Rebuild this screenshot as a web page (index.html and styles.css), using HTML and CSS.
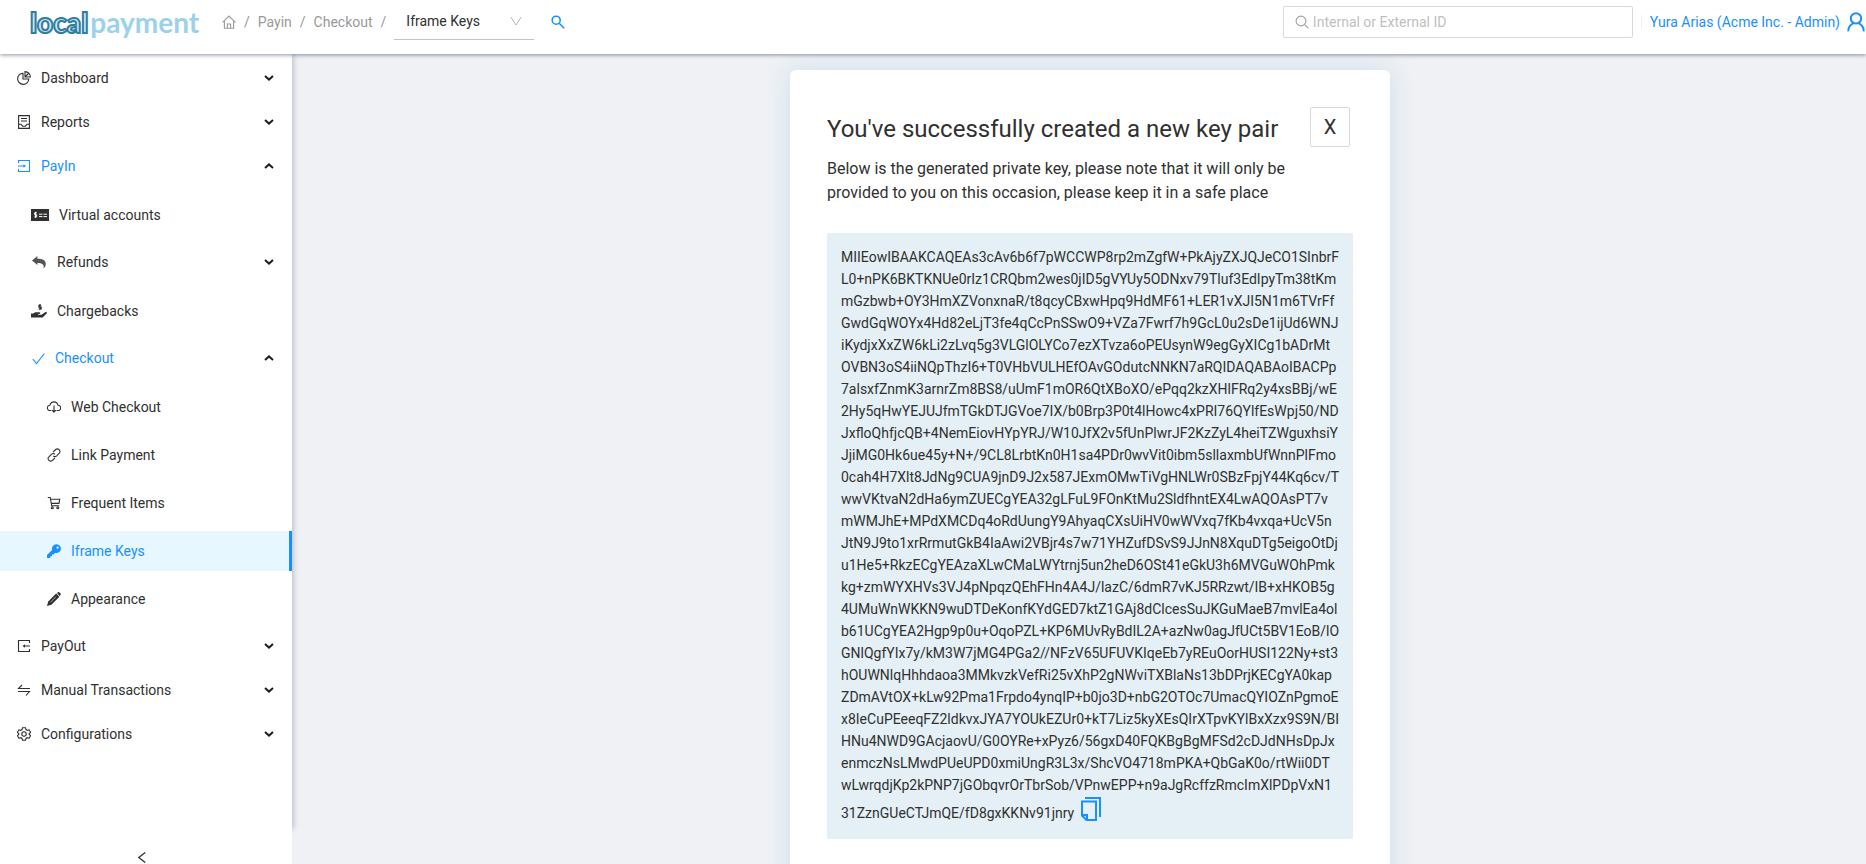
FILE: index.html
```html
<!DOCTYPE html>
<html lang="en">
<head>
<meta charset="utf-8">
<title>Iframe Keys</title>
<link rel="stylesheet" href="styles.css">
</head>
<body>
<div class="app">
  <header class="header">
    <a class="logo" href="#" aria-label="localpayment"><span class="logo-local">local</span><span class="logo-payment">payment</span></a>
    <nav class="breadcrumb" aria-label="Breadcrumb">
      <a class="crumb crumb-home" href="#" aria-label="Home"><svg class="icon" viewBox="0 0 14 14"><path d="M.6 7.4 7 1l6.400 6.400M2.400 6v7.200h9.200V6M5.400 13.200V9h3.200v4.200"/></svg></a>
      <span class="slash">/</span>
      <a class="crumb" href="#">Payin</a>
      <span class="slash">/</span>
      <a class="crumb" href="#">Checkout</a>
      <span class="slash">/</span>
      <span class="picker">
        <select class="picker-select" aria-label="Section"><option>Iframe Keys</option></select>
        <svg class="picker-arrow" viewBox="0 0 12 12"><path d="M.8 2 6 10l5.200-8"/></svg>
      </span>
    </nav>
    <button class="search-button" aria-label="Search"><svg class="icon" viewBox="0 0 14 14"><circle cx="5.2" cy="5.2" r="4"/><path d="m8.200 8.200 5 5"/></svg></button>
    <label class="search-box">
      <svg class="icon" viewBox="0 0 14 14"><circle cx="6" cy="6" r="4.9"/><path d="m9.600 9.600 3.800 3.800"/></svg>
      <input class="search-input" type="text" placeholder="Internal or External ID" aria-label="Internal or External ID">
    </label>
    <a class="user" href="#">Yura Arias (Acme Inc. - Admin)
      <svg class="user-icon" viewBox="0 0 18 20"><circle cx="9" cy="6.4" r="5.2"/><path d="M1.200 19.400c.2-4.200 2.600-7 5.400-8.200M16.800 19.400c-.2-4.200-2.600-7-5.400-8.200"/></svg>
    </a>
  </header>

  <div class="body">
    <aside class="sidebar">
      <nav class="menu-wrap" aria-label="Main">
        <ul class="menu">
          <li><button class="title"><svg class="icon" viewBox="0 0 14 14"><path d="M6 2.200A5.600 5.600 0 1 0 11.800 8H6zM8 .6V6h5.400A5.500 5.500 0 0 0 8 .6zM8 6l3.500-3.500"/></svg>Dashboard<svg class="arrow" viewBox="0 0 10 6"><path d="m1 1 4 3.600L9 1"/></svg></button></li>
          <li><button class="title"><svg class="icon" viewBox="0 0 14 14"><path d="M1.600.6h10.800v12.800H1.600zM4 3.500h6M4 6h6M1.600 9.200H4l1.600 2h2.800l1.600-2h2.400"/></svg>Reports<svg class="arrow" viewBox="0 0 10 6"><path d="m1 1 4 3.600L9 1"/></svg></button></li>
          <li>
            <button class="title active"><svg class="icon" viewBox="0 0 14 14"><path d="M1.500 4V1.500h11v11h-11V10M1 7h6.500"/><path class="solid" d="M6.500 5.200 9 7 6.500 8.800z"/></svg>PayIn<svg class="arrow" viewBox="0 0 10 6"><path d="m1 5 4-3.600L9 5"/></svg></button>
            <ul class="menu level2">
              <li class="leaf"><a class="entry" href="#"><svg class="icon card-icon" viewBox="0 0 18 12"><path class="solid" d="M0 0h18v12H0z"/><path class="light" d="M5.800 3.800H3.700v2h2v2.100H3.400M4.600 2.800v6.200M8 5.200h3.500M12.500 5.200H16M8 7.600h3.500M12.500 7.600H16"/></svg>Virtual accounts</a></li>
              <li><button class="title"><svg class="icon soft" viewBox="0 0 14 14"><path class="solid" d="M0 5.500 5.400 1v2.700c5.400 0 8.400 1.700 8.400 5.300 0 1.700-.9 3.400-2.300 4.300.9-3.700-1.200-5.300-6.100-5.300V10z"/></svg>Refunds<svg class="arrow" viewBox="0 0 10 6"><path d="m1 1 4 3.600L9 1"/></svg></button></li>
              <li class="leaf"><a class="entry" href="#"><svg class="icon hand-icon" viewBox="0 0 16 16"><path class="solid" d="M0 10.500h2.200l2-1.200h4.200c1.200 0 1.200 1.600 0 1.600H7v.8h3.500l3.600-2.500c1.300-.7 2.300.7 1.300 1.600L11.600 14.600H0z"/><path d="M10.200 2.200H7.900v1.900h2.300V6H7.700M9 1v6"/></svg>Chargebacks</a></li>
              <li>
                <button class="title active"><svg class="icon check-icon" viewBox="0 0 13 14"><path d="m.8 8 3.700 4.500L12.400 2.500"/></svg>Checkout<svg class="arrow" viewBox="0 0 10 6"><path d="m1 5 4-3.600L9 5"/></svg></button>
                <ul class="menu level3">
                  <li class="leaf"><a class="entry" href="#"><svg class="icon" viewBox="0 0 14 14"><path d="M4.400 10.500H3A2.600 2.600 0 0 1 2.900 5.300C3.500 3 5 1.900 7 1.900s3.500 1.100 4.100 3.400A2.600 2.600 0 0 1 11 10.500H9.600M7 5.600v6.600M5.200 10.200 7 12.200l1.800-2"/></svg>Web Checkout</a></li>
                  <li class="leaf"><a class="entry" href="#"><svg class="icon" viewBox="0 0 14 14"><path d="M6 4.200 8.700 1.500c2.200-1.900 5.600 1.100 3.600 3.600L9.700 7.800c-1.100 1-2.600 1-3.600 0M8 9.800l-2.700 2.700c-2.300 1.900-5.500-1.200-3.600-3.500l2.700-2.700c1-1 2.600-1 3.600 0"/></svg>Link Payment</a></li>
                  <li class="leaf"><a class="entry" href="#"><svg class="icon" viewBox="0 0 14 14"><path d="M.8 1.500h2.400l1.500 8.300h7.500M3.700 3.200h9L12 7.400H4.500"/><circle cx="5.3" cy="11.8" r="1"/><circle cx="10.8" cy="11.8" r="1"/></svg>Frequent Items</a></li>
                  <li class="leaf"><a class="entry selected" href="#"><svg class="icon" viewBox="0 0 14 14"><path class="solid" fill-rule="evenodd" d="M9.500.2a4.400 4.400 0 0 0-4.300 5.700L0 11.100V14h3.300v-1.700H5v-1.700h1.600L8.200 8.800A4.400 4.400 0 1 0 9.500.2zm1.100 2.200a1.200 1.200 0 1 1 0 2.400 1.200 1.200 0 0 1 0-2.400z"/></svg>Iframe Keys</a></li>
                  <li class="leaf"><a class="entry" href="#"><svg class="icon" viewBox="0 0 14 14"><path class="solid" d="m10 1 1.200-.8c.5-.3.9-.2 1.300.2l1.100 1.100c.4.4.4.800 0 1.300l-1 1.200zM9.200 1.600l3.200 3.200-8 8L0 14l1.200-4.400z"/><path class="light" stroke-width=".6" d="m8.800 4.900-5.400 5.400"/></svg>Appearance</a></li>
                </ul>
              </li>
            </ul>
          </li>
          <li><button class="title"><svg class="icon" viewBox="0 0 14 14"><path d="M12.500 4V1.500h-11v11h11V10M13 7H7"/><path class="solid" d="M8 5.200 5.500 7 8 8.800z"/></svg>PayOut<svg class="arrow" viewBox="0 0 10 6"><path d="m1 1 4 3.600L9 1"/></svg></button></li>
          <li><button class="title"><svg class="icon" viewBox="0 0 14 14"><path d="M13 5.500H1.500L5 2M1 8.500h11.500L9 12.500"/></svg>Manual Transactions<svg class="arrow" viewBox="0 0 10 6"><path d="m1 1 4 3.600L9 1"/></svg></button></li>
          <li><button class="title"><svg class="icon" viewBox="0 0 14 14"><path d="M5.500.7h3l.5 1.900 1.300.7 1.900-.5 1.400 2.500-1.400 1.300v.8l1.400 1.300-1.400 2.500-1.900-.5-1.300.7-.5 1.900h-3L5 11.400l-1.300-.7-1.900.5L.4 8.700l1.400-1.300v-.8L.4 5.300l1.400-2.500 1.900.5L5 2.600z"/><circle cx="7" cy="7" r="2.2"/></svg>Configurations<svg class="arrow" viewBox="0 0 10 6"><path d="m1 1 4 3.600L9 1"/></svg></button></li>
        </ul>
      </nav>
      <button class="collapse" aria-label="Collapse menu"><svg class="collapse-icon" viewBox="0 0 10 14"><path d="M8.500 1.500 1.500 7l7 5.500"/></svg></button>
    </aside>

    <main class="content">
      <section class="card">
        <div class="card-head">
          <h1 class="card-title">You've successfully created a new key pair</h1>
          <button class="close" aria-label="Close">X</button>
        </div>
        <p class="note">Below is the generated private key, please note that it will only be provided to you on this occasion, please keep it in a safe place</p>
        <div class="key">MIIEowIBAAKCAQEAs3cAv6b6f7pWCCWP8rp2mZgfW+PkAjyZXJQJeCO1SInbrF
L0+nPK6BKTKNUe0rIz1CRQbm2wes0jID5gVYUy5ODNxv79Tluf3EdIpyTm38tKm
mGzbwb+OY3HmXZVonxnaR/t8qcyCBxwHpq9HdMF61+LER1vXJI5N1m6TVrFf
GwdGqWOYx4Hd82eLjT3fe4qCcPnSSwO9+VZa7Fwrf7h9GcL0u2sDe1ijUd6WNJ
iKydjxXxZW6kLi2zLvq5g3VLGlOLYCo7ezXTvza6oPEUsynW9egGyXICg1bADrMt
OVBN3oS4iiNQpThzI6+T0VHbVULHEfOAvGOdutcNNKN7aRQIDAQABAoIBACPp
7alsxfZnmK3arnrZm8BS8/uUmF1mOR6QtXBoXO/ePqq2kzXHlFRq2y4xsBBj/wE
2Hy5qHwYEJUJfmTGkDTJGVoe7IX/b0Brp3P0t4lHowc4xPRI76QYlfEsWpj50/ND
JxfloQhfjcQB+4NemEiovHYpYRJ/W10JfX2v5fUnPlwrJF2KzZyL4heiTZWguxhsiY
JjiMG0Hk6ue45y+N+/9CL8LrbtKn0H1sa4PDr0wvVit0ibm5sllaxmbUfWnnPlFmo
0cah4H7Xlt8JdNg9CUA9jnD9J2x587JExmOMwTiVgHNLWr0SBzFpjY44Kq6cv/T
wwVKtvaN2dHa6ymZUECgYEA32gLFuL9FOnKtMu2SldfhntEX4LwAQOAsPT7v
mWMJhE+MPdXMCDq4oRdUungY9AhyaqCXsUiHV0wWVxq7fKb4vxqa+UcV5n
JtN9J9to1xrRrmutGkB4IaAwi2VBjr4s7w71YHZufDSvS9JJnN8XquDTg5eigoOtDj
u1He5+RkzECgYEAzaXLwCMaLWYtrnj5un2heD6OSt41eGkU3h6MVGuWOhPmk
kg+zmWYXHVs3VJ4pNpqzQEhFHn4A4J/lazC/6dmR7vKJ5RRzwt/IB+xHKOB5g
4UMuWnWKKN9wuDTDeKonfKYdGED7ktZ1GAj8dClcesSuJKGuMaeB7mvlEa4ol
b61UCgYEA2Hgp9p0u+OqoPZL+KP6MUvRyBdIL2A+azNw0agJfUCt5BV1EoB/lO
GNlQgfYIx7y/kM3W7jMG4PGa2//NFzV65UFUVKIqeEb7yREuOorHUSI122Ny+st3
hOUWNlqHhhdaoa3MMkvzkVefRi25vXhP2gNWviTXBlaNs13bDPrjKECgYA0kap
ZDmAVtOX+kLw92Pma1Frpdo4ynqIP+b0jo3D+nbG2OTOc7UmacQYIOZnPgmoE
x8IeCuPEeeqFZ2ldkvxJYA7YOUkEZUr0+kT7Liz5kyXEsQIrXTpvKYlBxXzx9S9N/BI
HNu4NWD9GAcjaovU/G0OYRe+xPyz6/56gxD40FQKBgBgMFSd2cDJdNHsDpJx
enmczNsLMwdPUeUPD0xmiUngR3L3x/ShcVO4718mPKA+QbGaK0o/rtWii0DT
wLwrqdjKp2kPNP7jGObqvrOrTbrSob/VPnwEPP+n9aJgRcffzRmcImXlPDpVxN1
31ZznGUeCTJmQE/fD8gxKKNv91jnry <button class="copy" aria-label="Copy"><svg class="copy-icon" viewBox="0 0 20 24"><path d="M4 1h15v19M1 4.500h14V23H5.500L1 18.500zM1 18h5v5"/></svg></button></div>
      </section>
    </main>
  </div>
</div>
</body>
</html>
```

FILE: styles.css
```css
* { box-sizing: border-box; }

body {
  margin: 0;
  font: 14px/22px Roboto, "Liberation Sans", sans-serif;
  color: #303030;
}

a { color: inherit; text-decoration: none; }

button {
  font: inherit;
  color: inherit;
  background: none;
  border: 0;
  padding: 0;
  cursor: pointer;
}

svg {
  display: block;
  flex: none;
  fill: none;
  stroke: currentColor;
}

.app {
  display: flex;
  flex-direction: column;
  height: 100vh;
  overflow: hidden;
}

/* Header */
.header {
  position: relative;
  z-index: 2;
  flex: none;
  display: flex;
  align-items: center;
  height: 54px;
  padding: 0 0 11px 30px;
  background: #fff;
  box-shadow: 0 1px 4px rgba(0, 21, 41, 0.45);
}

.logo {
  width: 192px;
  font: 28px/36px Lato, sans-serif;
  white-space: nowrap;
}

.logo-local {
  margin-right: 2px;
  color: #d5eaf3;
  font-weight: 900;
  -webkit-text-stroke: 2px #2f7fa3;
}

.logo-payment { color: #9bd2ea; font-weight: 700; }

.breadcrumb {
  display: flex;
  align-items: center;
  color: #999;
}

.slash { margin: 0 8px; }

.icon {
  width: 14px;
  height: 14px;
  stroke-width: 1.1;
}

.solid { fill: currentColor; stroke: none; }
.light { stroke: #fff; }

.picker {
  display: grid;
  align-items: center;
  width: 140px;
  height: 36px;
  border-bottom: 1px solid #c4c4c4;
}

.picker-select {
  grid-area: 1 / 1;
  appearance: none;
  width: 100%;
  height: 34px;
  padding: 0 12px;
  border: 0;
  background: none;
  font: inherit;
  color: #303030;
}

.picker-arrow {
  grid-area: 1 / 1;
  justify-self: end;
  width: 12px;
  height: 12px;
  margin-right: 12px;
  color: #b5b5b5;
}

.search-button { margin-left: 17px; color: #1890ff; }
.search-button .icon { stroke-width: 1.6; }

.search-box {
  display: flex;
  align-items: center;
  gap: 4px;
  width: 350px;
  height: 32px;
  margin-left: auto;
  padding: 0 11px;
  border: 1px solid #d9d9d9;
  border-radius: 2px;
  color: #a0a0a0;
}

.search-input {
  flex: 1;
  min-width: 0;
  padding: 0;
  border: 0;
  outline: 0;
  font: inherit;
}

.search-input::placeholder { color: #bfbfbf; }

.user {
  display: flex;
  align-items: center;
  gap: 7px;
  margin-left: 8px;
  padding: 0 1px 0 8px;
  border-left: 1px solid #f0f0f0;
  line-height: 14px;
  color: #1890ff;
}

.user-icon {
  width: 18px;
  height: 20px;
  margin: -3px 0;
  stroke-width: 2;
}

/* Layout */
.body {
  flex: 1;
  display: flex;
  min-height: 0;
  background: #eff1f5;
}

.sidebar {
  position: relative;
  z-index: 1;
  flex: none;
  display: flex;
  flex-direction: column;
  width: 292px;
}

.menu-wrap {
  flex: 1;
  padding-top: 4px;
  background: #fff;
  box-shadow: 1px 0 6px rgba(0, 21, 41, 0.25);
}

.menu { margin: 0; padding: 0; list-style: none; }

.title {
  display: flex;
  align-items: center;
  gap: 10px;
  width: 100%;
  height: 40px;
  padding: 0 18px 0 17px;
  text-align: left;
}

.menu li { display: flow-root; margin: 4px 0; }
.menu > li:first-child { margin-top: 0; }
.menu > li:last-child { margin-bottom: 0; }
.menu .leaf { margin: 7px 0; }
.menu .leaf:first-child { margin-top: 9px; }
.level3 > .leaf { margin: 8px 0; }
.level3 > .leaf:last-child { margin-bottom: 3px; }
.menu .leaf + li:not(.leaf) { margin-top: 7px; }
.level2 > li + .leaf { margin-top: 9px; }

.arrow {
  width: 10px;
  height: 6px;
  margin-left: auto;
  color: #1f1f1f;
  stroke-width: 2;
}

.entry {
  display: flex;
  align-items: center;
  gap: 10px;
  height: 40px;
  padding: 0 16px 0 31px;
}

.level2 .title { padding-left: 32px; gap: 11px; }
.level3 .entry { padding-left: 47px; }
.active, .selected { color: #1890ff; }
.active .arrow { color: #1f1f1f; }
.level2 .active { gap: 10px; }
.card-icon { width: 18px; height: 12px; stroke-width: 1; }
.hand-icon { width: 16px; height: 16px; }
.check-icon { width: 13px; }
.soft { color: #555; }

.selected {
  background: #e6f7ff;
  border-right: 3px solid #1890ff;
}

.collapse {
  display: flex;
  justify-content: center;
  align-items: flex-end;
  height: 35px;
  padding-right: 8px;
  background: #fff;
}

.collapse-icon { width: 10px; height: 13px; stroke-width: 1.4; }

.content {
  flex: 1;
  padding: 16px 0 0 22px;
}

/* Key card */
.card {
  width: 600px;
  margin: 0 auto;
  padding: 37px 37px 60px;
  border-radius: 6px;
  background: #fff;
  box-shadow: 0 0 24px rgba(160, 205, 225, 0.45);
}

.card-head {
  display: flex;
  justify-content: space-between;
  padding-right: 3px;
}

.card-title {
  margin: 6px 0 0;
  font-size: 24px;
  line-height: 32px;
  font-weight: 400;
}

.close {
  width: 40px;
  height: 40px;
  border: 1px solid #d9d9d9;
  border-radius: 2px;
  font-size: 20px;
}

.note {
  margin: 10px 0 28px;
  padding-right: 60px;
  font-size: 16px;
  line-height: 24px;
}

.key {
  padding: 13px 14px 15px;
  background: #e4f0f6;
  white-space: pre;
}

.copy {
  display: inline-block;
  margin-left: 3px;
  padding-top: 1px;
  vertical-align: -3px;
  color: #1890ff;
}

.copy-icon { width: 20px; height: 24px; stroke-width: 2; }
```
